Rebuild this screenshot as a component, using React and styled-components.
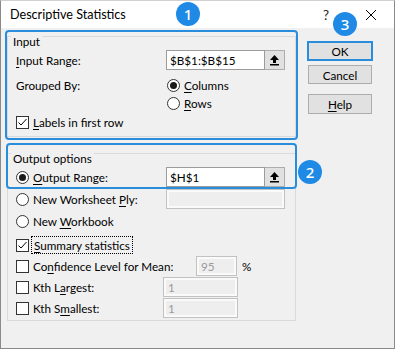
import React from 'react';
import styled, { createGlobalStyle } from 'styled-components';

const Global = createGlobalStyle`
  html, body { margin: 0; padding: 0; background: #ffffff; }
  *, *::before, *::after { box-sizing: border-box; }
`;

const BLUE = '#2a8ddc';
const BADGE = '#1e8ae6';

const Window = styled.div`
  position: relative;
  width: 395px;
  height: 349px;
  border: 1px solid #8a8a8a;
  border-top-color: #d0d0d0;
  background: #f0f0f0;
  font-family: Lato, "Noto Sans", sans-serif;
  font-size: 11.7px;
  color: #000;
  display: flex;
  flex-direction: column;
  overflow: hidden;
`;

const TitleBar = styled.div`
  height: 27px;
  flex: none;
  background: #ffffff;
  display: flex;
  align-items: center;
  padding-left: 9px;
`;

const TitleText = styled.div`
  flex: 1;
  font-size: 12.6px;
  line-height: 16px;
`;

const HelpMark = styled.div`
  font-size: 13.5px;
  line-height: 16px;
  margin-right: 36px;
  color: #222;
`;

const CloseIcon = styled.svg`
  width: 12px;
  height: 12px;
  margin-right: 17px;
  flex: none;
`;

const Body = styled.div`
  flex: 1;
  display: flex;
  padding-left: 6px;
`;

const LeftCol = styled.div`
  width: 289px;
  display: flex;
  flex-direction: column;
`;

const GroupBox = styled.div`
  border: 1px solid #dadada;
  margin-top: ${p => p.$mt}px;
  padding: 0 8px ${p => p.$pb}px 8px;
  display: flex;
  flex-direction: column;
`;

const Legend = styled.div`
  align-self: flex-start;
  margin: -3px 0 0 -5px;
  padding: 0 2px;
  line-height: 14px;
  background: #f0f0f0;
`;

const Row = styled.div`
  display: flex;
  align-items: center;
  height: ${p => p.$h}px;
  margin-top: ${p => p.$mt || 0}px;
`;

const Label = styled.div`
  width: ${p => p.$w}px;
  flex: none;
  line-height: 14px;
  white-space: nowrap;
`;

const Mn = styled.span`
  text-decoration: underline;
  text-underline-offset: 2px;
  text-decoration-thickness: 1px;
`;

const Option = styled.div`
  display: flex;
  align-items: center;
  gap: 4px;
  width: ${p => (p.$w ? `${p.$w}px` : 'auto')};
  flex: none;
  line-height: 14px;
  white-space: nowrap;
`;

const RadioDot = styled.span`
  width: 13px;
  height: 13px;
  flex: none;
  border-radius: 50%;
  border: 1px solid #333;
  background: #fff;
  display: flex;
  align-items: center;
  justify-content: center;
  &::after {
    content: '';
    width: 7px;
    height: 7px;
    border-radius: 50%;
    background: ${p => (p.$on ? '#1a1a1a' : 'transparent')};
  }
`;

const CheckBox = styled.span`
  width: 13px;
  height: 13px;
  flex: none;
  border: 1px solid #333;
  background: #fff;
  display: flex;
  align-items: center;
  justify-content: center;
`;

const FocusText = styled.span`
  outline: 1px dotted #000;
  outline-offset: 1px;
  padding: 0 1px;
`;

const RefField = styled.div`
  display: flex;
  height: 20px;
  flex: none;
`;

const TextBox = styled.div`
  width: ${p => p.$w}px;
  height: 100%;
  border: 1px solid #9c9c9c;
  background: #fff;
  padding-left: 3px;
  display: flex;
  align-items: center;
  line-height: 14px;
`;

const RefButton = styled.div`
  width: 20px;
  height: 100%;
  border: 1px solid #adadad;
  border-left: none;
  background: #e1e1e1;
  display: flex;
  align-items: center;
  justify-content: center;
`;

const DisabledBox = styled.div`
  width: ${p => p.$w}px;
  height: 20px;
  flex: none;
  border: 1px solid #c2c2c2;
  box-shadow: inset 0 0 0 2px #fafafa;
  background: #eeeeee;
  color: #9a9a9a;
  padding-left: 4px;
  display: flex;
  align-items: center;
  line-height: 14px;
`;

const Percent = styled.span`
  margin-left: 5px;
  line-height: 14px;
`;

const RightCol = styled.div`
  width: 66px;
  margin-left: 11px;
  padding-top: 13px;
  display: flex;
  flex-direction: column;
`;

const Button = styled.div`
  height: ${p => p.$h || 19}px;
  margin: ${p => p.$mt || 0}px ${p => (p.$default ? 0 : 1)}px 0;
  border: ${p => (p.$default ? `2px solid ${BLUE}` : '1px solid #adadad')};
  background: #e1e1e1;
  display: flex;
  align-items: center;
  justify-content: center;
  line-height: 14px;
`;

const Highlight = styled.div`
  position: absolute;
  border: 2px solid ${BLUE};
  border-radius: 4px;
  pointer-events: none;
`;

const Badge = styled.div`
  position: absolute;
  width: 24px;
  height: 24px;
  border-radius: 50%;
  background: ${BADGE};
  color: #fff;
  font-family: "Noto Sans", sans-serif;
  font-size: 15px;
  font-weight: 500;
  display: flex;
  align-items: center;
  justify-content: center;
  line-height: 1;
`;

const UpArrow = () => (
  <svg width="11" height="12" viewBox="0 0 11 12">
    <polygon points="5.5,1 10,6 7,6 7,9 4,9 4,6 1,6" fill="#000" />
    <rect x="1" y="10" width="9" height="1.5" fill="#000" />
  </svg>
);

const Check = () => (
  <svg width="11" height="11" viewBox="0 0 11 11">
    <polyline points="1.5,5.5 4,8 9.5,2" fill="none" stroke="#000" strokeWidth="1" />
  </svg>
);

const Radio = ({ on, children, w }) => (
  <Option $w={w}>
    <RadioDot $on={on} />
    <span>{children}</span>
  </Option>
);

const Checkbox = ({ on, children, w }) => (
  <Option $w={w}>
    <CheckBox>{on && <Check />}</CheckBox>
    <span>{children}</span>
  </Option>
);

export default function App() {
  return (
    <>
      <Global />
      <Window>
        <TitleBar>
          <TitleText>Descriptive Statistics</TitleText>
          <HelpMark>?</HelpMark>
          <CloseIcon viewBox="0 0 12 12">
            <path d="M1 1 L11 11 M11 1 L1 11" stroke="#000" strokeWidth="1" />
          </CloseIcon>
        </TitleBar>
        <Body>
          <LeftCol>
            <GroupBox $mt={8} $pb={5}>
              <Legend>Input</Legend>
              <Row $h={20} $mt={2}>
                <Label $w={150}><Mn>I</Mn>nput Range:</Label>
                <RefField>
                  <TextBox $w={99}>$B$1:$B$15</TextBox>
                  <RefButton><UpArrow /></RefButton>
                </RefField>
              </Row>
              <Row $h={18} $mt={6}>
                <Label $w={151}>Grouped By:</Label>
                <Radio on><Mn>C</Mn>olumns</Radio>
              </Row>
              <Row $h={18}>
                <Label $w={151} />
                <Radio><Mn>R</Mn>ows</Radio>
              </Row>
              <Row $h={18} $mt={1}>
                <Checkbox on><Mn>L</Mn>abels in first row</Checkbox>
              </Row>
            </GroupBox>
            <GroupBox $mt={16} $pb={2}>
              <Legend>Output options</Legend>
              <Row $h={20} $mt={2}>
                <Radio on w={150}><Mn>O</Mn>utput Range:</Radio>
                <RefField>
                  <TextBox $w={99}>$H$1</TextBox>
                  <RefButton><UpArrow /></RefButton>
                </RefField>
              </Row>
              <Row $h={20} $mt={2}>
                <Radio w={150}>New Worksheet <Mn>P</Mn>ly:</Radio>
                <DisabledBox $w={119} />
              </Row>
              <Row $h={18} $mt={3}>
                <Radio>New <Mn>W</Mn>orkbook</Radio>
              </Row>
              <Row $h={18} $mt={6}>
                <Checkbox on><FocusText><Mn>S</Mn>ummary statistics</FocusText></Checkbox>
              </Row>
              <Row $h={20} $mt={2}>
                <Checkbox w={180}>Co<Mn>n</Mn>fidence Level for Mean:</Checkbox>
                <DisabledBox $w={41}>95</DisabledBox>
                <Percent>%</Percent>
              </Row>
              <Row $h={20} $mt={1}>
                <Checkbox w={147}>Kth L<Mn>a</Mn>rgest:</Checkbox>
                <DisabledBox $w={75}>1</DisabledBox>
              </Row>
              <Row $h={20} $mt={1}>
                <Checkbox w={147}>Kth S<Mn>m</Mn>allest:</Checkbox>
                <DisabledBox $w={75}>1</DisabledBox>
              </Row>
            </GroupBox>
          </LeftCol>
          <RightCol>
            <Button $default $h={20}>OK</Button>
            <Button $mt={4}>Cancel</Button>
            <Button $mt={10} $h={20}><span><Mn>H</Mn>elp</span></Button>
          </RightCol>
        </Body>
        <Highlight style={{ left: 4, top: 29, width: 293, height: 110 }} />
        <Highlight style={{ left: 5, top: 142, width: 291, height: 46 }} />
        <Badge style={{ left: 175, top: 1 }}>1</Badge>
        <Badge style={{ left: 297, top: 159 }}>2</Badge>
        <Badge style={{ left: 332, top: 11 }}>3</Badge>
      </Window>
    </>
  );
}
